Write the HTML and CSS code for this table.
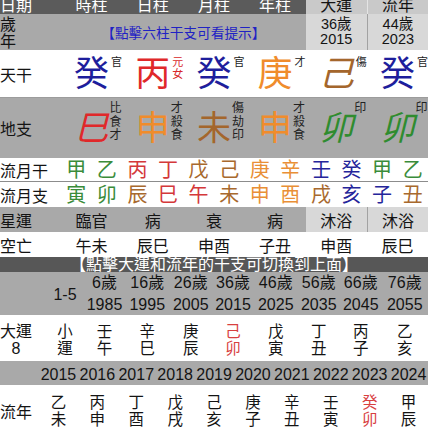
FILE: index.html
```html
<!DOCTYPE html>
<html lang="zh-Hant">
<head>
<meta charset="utf-8">
<title>八字排盤</title>
<link rel="stylesheet" href="styles.css">
</head>
<body>
<div class="chart">
  <div class="row six head">
    <div class="lbl">日期</div>
    <div class="cell">時柱</div>
    <div class="cell">日柱</div>
    <div class="cell">月柱</div>
    <div class="cell">年柱</div>
    <div class="cell hr">大運</div>
    <div class="cell hr dv-light">流年</div>
  </div>

  <div class="row six sui">
    <div class="lbl stack">歲<br>年</div>
    <div class="hint">【點擊六柱干支可看提示】</div>
    <div class="cell lt two">36歲<br>2015</div>
    <div class="cell lt two dv">44歲<br>2023</div>
  </div>

  <div class="row six tg">
    <div class="lbl">天干</div>
    <div class="cell"><span class="big c-blue">癸<span class="sup">官</span></span></div>
    <div class="cell"><span class="big c-red">丙<span class="sup s-red">元<br>女</span></span></div>
    <div class="cell"><span class="big c-blue">癸<span class="sup">官</span></span></div>
    <div class="cell"><span class="big c-orange">庚<span class="sup">才</span></span></div>
    <div class="cell"><span class="big c-brown it">己<span class="sup">傷</span></span></div>
    <div class="cell"><span class="big c-blue">癸<span class="sup">官</span></span></div>
  </div>

  <div class="row six dz">
    <div class="lbl">地支</div>
    <div class="cell"><span class="big c-red it">巳<span class="hid">比<br>食<br>才</span></span></div>
    <div class="cell"><span class="big c-orange">申<span class="hid">才<br>殺<br>食</span></span></div>
    <div class="cell"><span class="big c-brown">未<span class="hid">傷<br>劫<br>印</span></span></div>
    <div class="cell"><span class="big c-orange">申<span class="hid">才<br>殺<br>食</span></span></div>
    <div class="cell"><span class="big c-green it">卯<span class="hid">印</span></span></div>
    <div class="cell"><span class="big c-green it">卯<span class="hid">印</span></span></div>
  </div>

  <div class="row twelve ly ly-gan">
    <div class="lbl">流月干</div>
    <div class="cell m-green">甲</div>
    <div class="cell m-green">乙</div>
    <div class="cell m-red">丙</div>
    <div class="cell m-red">丁</div>
    <div class="cell m-brown">戊</div>
    <div class="cell m-brown">己</div>
    <div class="cell m-orange">庚</div>
    <div class="cell m-orange">辛</div>
    <div class="cell m-blue">壬</div>
    <div class="cell m-blue">癸</div>
    <div class="cell m-green">甲</div>
    <div class="cell m-green">乙</div>
  </div>

  <div class="row twelve ly ly-zhi">
    <div class="lbl">流月支</div>
    <div class="cell m-green">寅</div>
    <div class="cell m-green">卯</div>
    <div class="cell m-brown">辰</div>
    <div class="cell m-red">巳</div>
    <div class="cell m-red">午</div>
    <div class="cell m-brown">未</div>
    <div class="cell m-orange">申</div>
    <div class="cell m-orange">酉</div>
    <div class="cell m-brown">戌</div>
    <div class="cell m-blue">亥</div>
    <div class="cell m-blue">子</div>
    <div class="cell m-brown">丑</div>
  </div>

  <div class="row six xy">
    <div class="lbl">星運</div>
    <div class="cell">臨官</div>
    <div class="cell">病</div>
    <div class="cell">衰</div>
    <div class="cell">病</div>
    <div class="cell lt">沐浴</div>
    <div class="cell lt dv">沐浴</div>
  </div>

  <div class="row six kw">
    <div class="lbl">空亡</div>
    <div class="cell">午未</div>
    <div class="cell">辰巳</div>
    <div class="cell">申酉</div>
    <div class="cell">子丑</div>
    <div class="cell">申酉</div>
    <div class="cell">辰巳</div>
  </div>

  <div class="banner">【點擊大運和流年的干支可切換到上面】</div>

  <div class="row dy ages">
    <div></div>
    <div class="cell small">1-5</div>
    <div class="cell ay"><span>6歲</span><span>1985</span></div>
    <div class="cell ay"><span>16歲</span><span>1995</span></div>
    <div class="cell ay"><span>26歲</span><span>2005</span></div>
    <div class="cell ay"><span>36歲</span><span>2015</span></div>
    <div class="cell ay"><span>46歲</span><span>2025</span></div>
    <div class="cell ay"><span>56歲</span><span>2035</span></div>
    <div class="cell ay"><span>66歲</span><span>2045</span></div>
    <div class="cell ay"><span>76歲</span><span>2055</span></div>
  </div>

  <div class="row dy gz dy-gz">
    <div class="lbl2">大運<br>8</div>
    <div class="cell">小<br>運</div>
    <div class="cell">壬<br>午</div>
    <div class="cell">辛<br>巳</div>
    <div class="cell">庚<br>辰</div>
    <div class="cell hl">己<br>卯</div>
    <div class="cell">戊<br>寅</div>
    <div class="cell">丁<br>丑</div>
    <div class="cell">丙<br>子</div>
    <div class="cell">乙<br>亥</div>
  </div>

  <div class="row ln years">
    <div></div>
    <div class="cell">2015</div>
    <div class="cell">2016</div>
    <div class="cell">2017</div>
    <div class="cell">2018</div>
    <div class="cell">2019</div>
    <div class="cell">2020</div>
    <div class="cell">2021</div>
    <div class="cell">2022</div>
    <div class="cell">2023</div>
    <div class="cell">2024</div>
  </div>

  <div class="row ln gz ln-gz">
    <div class="lbl3">流年</div>
    <div class="cell">乙<br>未</div>
    <div class="cell">丙<br>申</div>
    <div class="cell">丁<br>酉</div>
    <div class="cell">戊<br>戌</div>
    <div class="cell">己<br>亥</div>
    <div class="cell">庚<br>子</div>
    <div class="cell">辛<br>丑</div>
    <div class="cell">壬<br>寅</div>
    <div class="cell hl">癸<br>卯</div>
    <div class="cell">甲<br>辰</div>
  </div>
</div>
</body>
</html>
```

FILE: styles.css
```css
* { box-sizing: border-box; margin: 0; padding: 0; }
html, body { background: #fff; }
body {
  width: 428px;
  height: 428px;
  overflow: hidden;
  font-family: "Liberation Sans", "Noto Sans CJK TC", sans-serif;
  color: #141414;
  font-size: 16px;
}
.chart { display: flex; flex-direction: column; }

.row { display: grid; }
.six { grid-template-columns: 61px repeat(6, 1fr); }
.twelve { grid-template-columns: 61px repeat(12, 1fr); }
.dy { grid-template-columns: 46px 38px 41px 44.5px 42.5px 42px 43.5px 42.5px 41.5px 1fr; }
.ln { grid-template-columns: 39px repeat(10, 1fr); }

.cell { display: flex; align-items: center; justify-content: center; text-align: center; }
.lbl { display: flex; align-items: center; font-size: 16px; white-space: nowrap; }

/* header (top of the list is scrolled slightly out of view) */
.head { height: 14px; overflow: hidden; background: #5b5b5b; color: #fff; line-height: 16px; }
.head > div { height: 14px; align-items: flex-end; }
.head .hr { background: #c9c9c9; color: #141414; }
.head .dv-light { border-left: 1px solid #e4e4e4; }

/* 歲年 row */
.sui { height: 36px; background: #a9a9a9; }
.sui .stack { line-height: 17px; padding-top: 1px; }
.hint {
  grid-column: span 4;
  display: flex; align-items: center; justify-content: center;
  color: #1f22c4; font-size: 13.7px; white-space: nowrap;
}
.lt { background: #d8d8d8; }
.dv { border-left: 1px solid #a2a2a2; }
.two { font-size: 14.5px; line-height: 15px; }

/* 天干 / 地支 */
.tg { height: 48px; border-bottom: 1px solid #9c9c9c; }
.dz { height: 60px; background: #a9a9a9; }
.big { position: relative; font-size: 35px; line-height: 35px; }
.dz .big { font-size: 34px; line-height: 34px; }
.it { font-style: italic; }
.sup, .hid {
  position: absolute; left: 100%; font-style: normal; color: #222; white-space: nowrap;
}
.sup { top: 0; margin-left: 2px; font-size: 11px; line-height: 12px; }
.hid { top: -9px; margin-left: 1px; font-size: 12px; line-height: 13.5px; }
.s-red { color: #d8282a; }

.c-blue { color: #1e1e9c; }
.c-red { color: #e0282a; }
.c-orange { color: #f08c2c; }
.c-brown { color: #a4662c; }
.c-green { color: #2f8c2f; }

/* 流月 */
.ly .cell { font-size: 20px; line-height: 22px; }
.ly-gan { height: 24px; border-bottom: 1px solid #8c8c8c; }
.ly-zhi { height: 25px; }
.m-green { color: #3a8c3a; }
.m-red { color: #d4383a; }
.m-brown { color: #a8692e; }
.m-orange { color: #e98f36; }
.m-blue { color: #25259a; }

/* 星運 / 空亡 */
.xy { height: 25px; background: #a9a9a9; }
.kw { height: 25px; }

.banner {
  height: 15px; background: #575757; color: #fff;
  font-size: 16px; line-height: 15px; text-align: center; white-space: nowrap; overflow: hidden;
}

/* 大運 */
.ages { height: 43px; background: #a9a9a9; font-size: 16px; }
.ages .small { padding-top: 1px; }
.ay { flex-direction: column; line-height: 22px; padding-top: 0; white-space: nowrap; }
.gz .cell { font-size: 15.5px; line-height: 17px; }
.dy-gz { height: 46px; padding-top: 4px; }
.lbl2 { display: flex; align-items: center; justify-self: start; text-align: center; font-size: 16px; line-height: 17px; }
.hl { color: #d8403f; }

/* 流年 */
.years { height: 24px; background: #a9a9a9; font-size: 16px; }
.years .cell { padding-top: 3px; }
.ln-gz { height: 48px; padding-top: 4px; }
.lbl3 { display: flex; align-items: center; font-size: 16px; }
```
